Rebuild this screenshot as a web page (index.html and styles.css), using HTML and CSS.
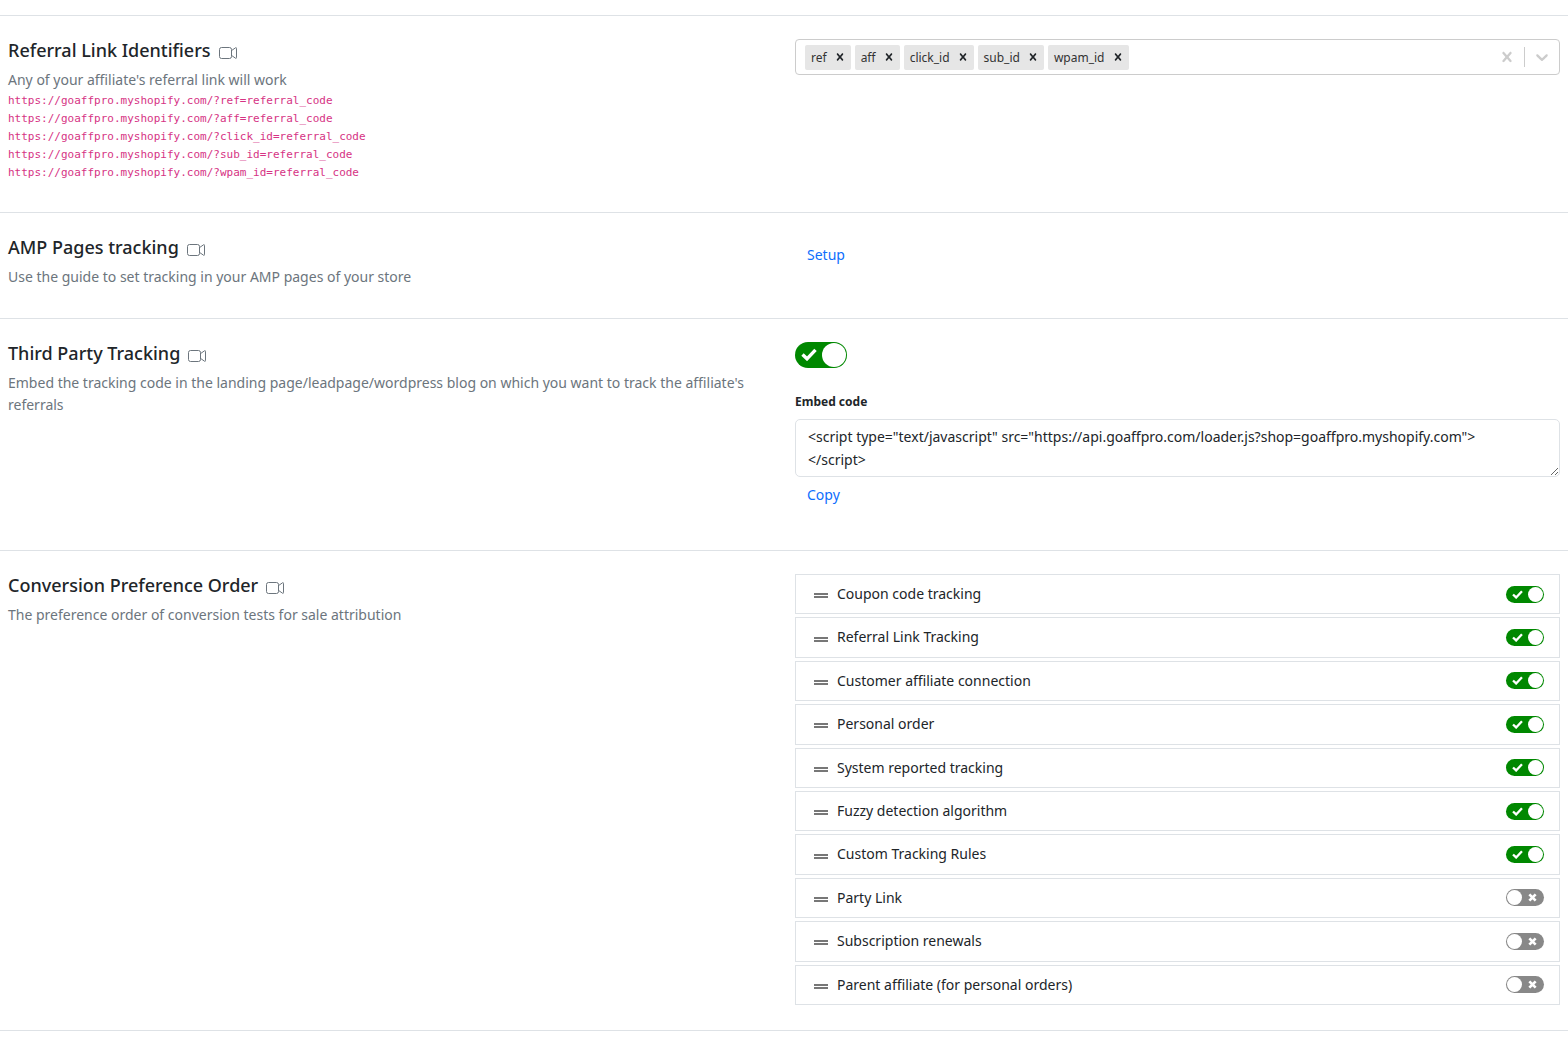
FILE: index.html
```html
<!DOCTYPE html>
<html lang="en">
<head>
<meta charset="utf-8">
<meta name="viewport" content="width=device-width, initial-scale=1">
<title>Tracking settings</title>
<link rel="stylesheet" href="styles.css">
</head>
<body>
<svg class="sprite" aria-hidden="true">
  <symbol id="camera" viewBox="0 0 18 12"><path d="M2.5.5h8q2 0 2 2v7q0 2-2 2h-8q-2 0-2-2v-7q0-2 2-2zM12.5 3.6 16.5.8q1-.4 1 .5v9.4q0 .9-1 .5l-4-2.8" fill="none" stroke="currentColor"/></symbol>
  <symbol id="cross" viewBox="0 0 20 20"><path d="M14.348 14.849c-.469.469-1.229.469-1.697 0L10 11.819l-2.651 3.029c-.469.469-1.229.469-1.697 0-.469-.469-.469-1.229 0-1.697l2.758-3.15-2.759-3.152c-.469-.469-.469-1.228 0-1.697s1.228-.469 1.697 0L10 8.183l2.651-3.031c.469-.469 1.228-.469 1.697 0s.469 1.229 0 1.697l-2.758 3.152 2.758 3.15c.469.469.469 1.229 0 1.698z" fill="currentColor"/></symbol>
  <symbol id="chevron" viewBox="0 0 20 20"><path d="M4.516 7.548c.436-.446 1.043-.481 1.576 0L10 11.295l3.908-3.747c.533-.481 1.141-.446 1.574 0 .436.445.408 1.197 0 1.615-.406.418-4.695 4.502-4.695 4.502a1.095 1.095 0 0 1-1.576 0S4.924 9.581 4.516 9.163s-.436-1.17 0-1.615z" fill="currentColor"/></symbol>
  <symbol id="grip" viewBox="0 0 14 5"><path d="M0 0h14v2H0zM0 3h14v2H0z" fill="currentColor"/></symbol>
  <symbol id="tick" viewBox="0 0 16 13"><path d="M1.5 6.5 6 10.8 14.5 1.8" fill="none" stroke="currentColor" stroke-width="3.4"/></symbol>
  <symbol id="off" viewBox="0 0 10 10"><path d="M1.5 1.5l7 7M8.5 1.5l-7 7" fill="none" stroke="currentColor" stroke-width="3"/></symbol>
</svg>
<main>
  <section class="setting">
    <div class="about">
      <h2>Referral Link Identifiers <a href="#video" aria-label="Watch video"><svg class="camera"><use href="#camera"/></svg></a></h2>
      <p>Any of your affiliate's referral link will work</p>
      <code>https://goaffpro.myshopify.com/?ref=referral_code</code>
      <code>https://goaffpro.myshopify.com/?aff=referral_code</code>
      <code>https://goaffpro.myshopify.com/?click_id=referral_code</code>
      <code>https://goaffpro.myshopify.com/?sub_id=referral_code</code>
      <code>https://goaffpro.myshopify.com/?wpam_id=referral_code</code>
    </div>
    <div class="control">
      <div class="multi">
        <span class="tag">ref<button aria-label="Remove ref"><svg><use href="#cross"/></svg></button></span>
        <span class="tag">aff<button aria-label="Remove aff"><svg><use href="#cross"/></svg></button></span>
        <span class="tag">click_id<button aria-label="Remove click_id"><svg><use href="#cross"/></svg></button></span>
        <span class="tag">sub_id<button aria-label="Remove sub_id"><svg><use href="#cross"/></svg></button></span>
        <span class="tag">wpam_id<button aria-label="Remove wpam_id"><svg><use href="#cross"/></svg></button></span>
        <input class="entry" type="text" aria-label="Add identifier">
        <button class="tool" aria-label="Clear all"><svg><use href="#cross"/></svg></button>
        <span class="bar"></span>
        <button class="tool" aria-label="Open list"><svg><use href="#chevron"/></svg></button>
      </div>
    </div>
  </section>

  <section class="setting">
    <div class="about">
      <h2>AMP Pages tracking <a href="#video" aria-label="Watch video"><svg class="camera"><use href="#camera"/></svg></a></h2>
      <p>Use the guide to set tracking in your AMP pages of your store</p>
    </div>
    <div class="control"><button class="link">Setup</button></div>
  </section>

  <section class="setting roomy">
    <div class="about">
      <h2>Third Party Tracking <a href="#video" aria-label="Watch video"><svg class="camera"><use href="#camera"/></svg></a></h2>
      <p>Embed the tracking code in the landing page/leadpage/wordpress blog on which you want to track the affiliate's referrals</p>
    </div>
    <div class="control">
      <label class="switch large"><input type="checkbox" checked aria-label="Third party tracking"><svg class="on"><use href="#tick"/></svg><svg class="no"><use href="#off"/></svg></label>
      <label class="caption" for="embed">Embed code</label>
      <textarea id="embed" rows="2" readonly>&lt;script type="text/javascript" src="https://api.goaffpro.com/loader.js?shop=goaffpro.myshopify.com"&gt;
&lt;/script&gt;</textarea>
      <button class="link">Copy</button>
    </div>
  </section>

  <section class="setting">
    <div class="about">
      <h2>Conversion Preference Order <a href="#video" aria-label="Watch video"><svg class="camera"><use href="#camera"/></svg></a></h2>
      <p>The preference order of conversion tests for sale attribution</p>
    </div>
    <ul class="order">
      <li><svg class="grip"><use href="#grip"/></svg><label for="t1">Coupon code tracking</label><span class="switch"><input id="t1" type="checkbox" checked><svg class="on"><use href="#tick"/></svg><svg class="no"><use href="#off"/></svg></span></li>
      <li><svg class="grip"><use href="#grip"/></svg><label for="t2">Referral Link Tracking</label><span class="switch"><input id="t2" type="checkbox" checked><svg class="on"><use href="#tick"/></svg><svg class="no"><use href="#off"/></svg></span></li>
      <li><svg class="grip"><use href="#grip"/></svg><label for="t3">Customer affiliate connection</label><span class="switch"><input id="t3" type="checkbox" checked><svg class="on"><use href="#tick"/></svg><svg class="no"><use href="#off"/></svg></span></li>
      <li><svg class="grip"><use href="#grip"/></svg><label for="t4">Personal order</label><span class="switch"><input id="t4" type="checkbox" checked><svg class="on"><use href="#tick"/></svg><svg class="no"><use href="#off"/></svg></span></li>
      <li><svg class="grip"><use href="#grip"/></svg><label for="t5">System reported tracking</label><span class="switch"><input id="t5" type="checkbox" checked><svg class="on"><use href="#tick"/></svg><svg class="no"><use href="#off"/></svg></span></li>
      <li><svg class="grip"><use href="#grip"/></svg><label for="t6">Fuzzy detection algorithm</label><span class="switch"><input id="t6" type="checkbox" checked><svg class="on"><use href="#tick"/></svg><svg class="no"><use href="#off"/></svg></span></li>
      <li><svg class="grip"><use href="#grip"/></svg><label for="t7">Custom Tracking Rules</label><span class="switch"><input id="t7" type="checkbox" checked><svg class="on"><use href="#tick"/></svg><svg class="no"><use href="#off"/></svg></span></li>
      <li><svg class="grip"><use href="#grip"/></svg><label for="t8">Party Link</label><span class="switch"><input id="t8" type="checkbox"><svg class="on"><use href="#tick"/></svg><svg class="no"><use href="#off"/></svg></span></li>
      <li><svg class="grip"><use href="#grip"/></svg><label for="t9">Subscription renewals</label><span class="switch"><input id="t9" type="checkbox"><svg class="on"><use href="#tick"/></svg><svg class="no"><use href="#off"/></svg></span></li>
      <li><svg class="grip"><use href="#grip"/></svg><label for="t10">Parent affiliate (for personal orders)</label><span class="switch"><input id="t10" type="checkbox"><svg class="on"><use href="#tick"/></svg><svg class="no"><use href="#off"/></svg></span></li>
    </ul>
  </section>
</main>
</body>
</html>
```
FILE: styles.css
```css
* { box-sizing: border-box; }

body {
  margin: 0;
  background: #fff;
  color: #212529;
  font: 14px/1.6 "Noto Sans", "Open Sans", sans-serif;
}

button, input, textarea { font: inherit; color: inherit; }
button { border: 0; padding: 0; background: none; cursor: pointer; }
svg { display: block; }
.sprite { display: none; }

main { padding-top: 15px; }

.setting {
  display: grid;
  grid-template-columns: 1fr 1fr;
  gap: 22px;
  padding: 23px 8px 30px;
  border-top: 1px solid #dee2e6;
}
.setting:last-child { padding-bottom: 25px; border-bottom: 1px solid #dee2e6; }
.setting.roomy { padding-bottom: 36px; }

h2 {
  display: flex;
  align-items: center;
  gap: 8px;
  margin: 0 0 8px;
  font-size: 18px;
  line-height: 22px;
  font-weight: 500;
}
h2 a { color: #6c757d; padding-top: 5px; }
.camera { width: 18px; height: 12px; }

p { margin: 0; line-height: 22px; color: #6c757d; }

code {
  display: block;
  font: 11px/18px "DejaVu Sans Mono", monospace;
  color: #d63384;
}
p + code { margin-top: 1px; }

.control { display: flex; flex-direction: column; align-items: flex-start; }

.multi {
  display: flex;
  align-items: center;
  gap: 4px;
  width: 100%;
  height: 36px;
  padding: 0 4px 0 9px;
  border: 1px solid #ccc;
  border-radius: 4px;
}
.tag {
  display: flex;
  height: 25px;
  padding-left: 6px;
  border-radius: 2px;
  background: #e6e6e6;
  color: #333;
  font-size: 12px;
  line-height: 25px;
}
.tag button { padding: 0 4px; margin-left: 2px; color: #212529; }
.tag svg { width: 14px; height: 14px; }
.entry { flex: 1; min-width: 0; border: 0; outline: 0; background: none; }
.tool { padding: 0 3px; color: #ccc; }
.tool svg { width: 20px; height: 20px; }
.bar { width: 1px; height: 20px; background: #ccc; }

.link { padding: 8px 12px; line-height: 22px; color: #0d6efd; }

.caption { margin: 23px 0 6px; font-size: 12px; line-height: 22px; font-weight: 700; }
textarea {
  width: 100%;
  padding: 5px 12px;
  border: 1px solid #dee2e6;
  border-radius: 5px;
  line-height: 23px;
  resize: vertical;
  overflow: hidden;
}
textarea + .link { padding-top: 7px; }

.switch { position: relative; display: block; width: 38px; height: 17px; }
.switch input {
  appearance: none;
  display: flex;
  align-items: center;
  justify-content: flex-start;
  width: 100%;
  height: 100%;
  margin: 0;
  padding: 1px;
  border-radius: 13px;
  background: #888;
}
.switch input::before {
  content: "";
  height: 100%;
  aspect-ratio: 1;
  border-radius: 50%;
  background: #fff;
}
.switch input:checked { justify-content: flex-end; background: #080; }
.switch svg { position: absolute; color: #fff; pointer-events: none; }
.switch .on { display: none; left: 6px; top: 4px; width: 11px; height: 9px; }
.switch .no { right: 7px; top: 4px; width: 9px; height: 9px; }
.switch input:checked ~ .on { display: block; }
.switch input:checked ~ .no { display: none; }
.switch.large { width: 52px; height: 26px; }
.large input:checked ~ .on { left: 6px; top: 6px; width: 16px; height: 13px; }

.order { display: grid; gap: 3px; margin: 0; padding: 0; list-style: none; }
.order li {
  display: flex;
  align-items: center;
  padding: 8px 15px 8px 18px;
  border: 1px solid #dee2e6;
}
.order label { flex: 1; }
.grip { width: 14px; height: 5px; margin: 3px 9px 0 0; color: #777; }
```
